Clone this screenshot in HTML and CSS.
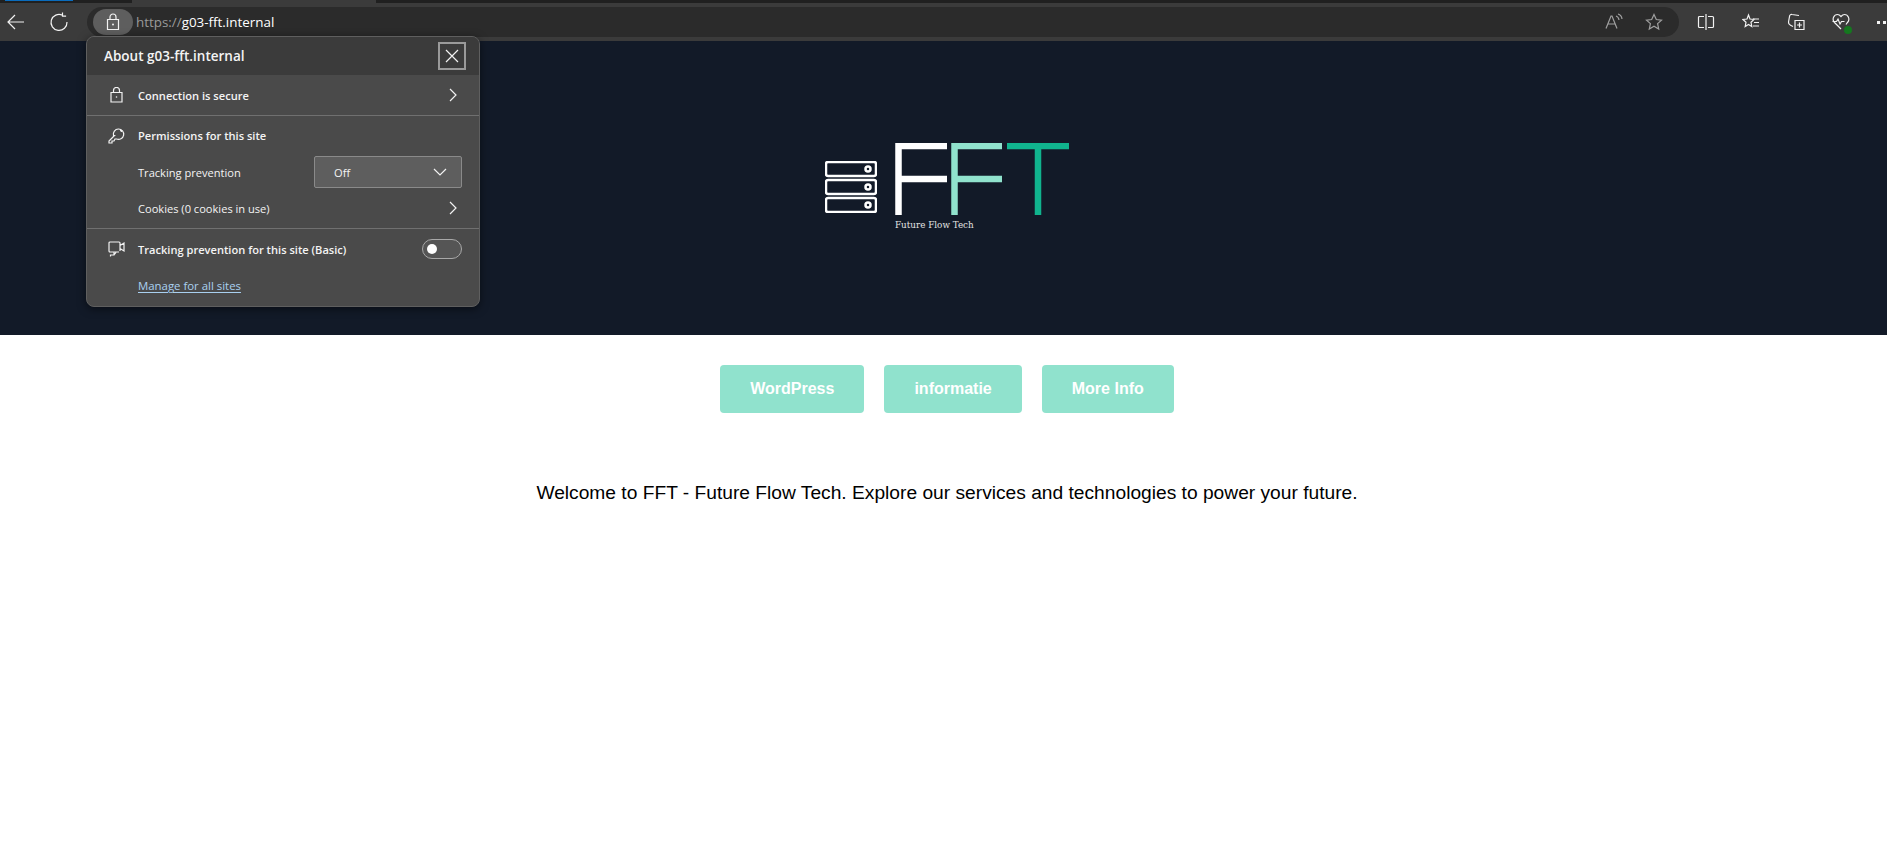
FILE: index.html
```html
<!DOCTYPE html>
<html>
<head>
    <title>FFT - Future Flow Tech</title>
    <link rel="stylesheet" href="styles.css">
</head>
<body>
    <div class="tabstrip">
        <div class="tab-accent"></div>
        <div class="tab-active"></div>
    </div>

    <div class="toolbar">
        <svg class="tool-icon" width="20" height="20" viewBox="0 0 20 20"><path d="M18 10H2M9 3l-7 7 7 7"/></svg>
        <svg class="tool-icon reload" width="20" height="20" viewBox="0 0 20 20"><path d="M13.5 3.2A8 8 0 1 0 18 10M13.5 0.5v3.6h3.6"/></svg>
        <div class="address">
            <div class="lock-pill">
                <svg class="tool-icon" width="16" height="18" viewBox="0 0 16 18"><path d="M2.5 6.5h11v10h-11zM5 6.5V4a3 3 0 0 1 6 0v2.5"/><circle class="dot" cx="8" cy="11.5" r="1"/></svg>
            </div>
            <span class="url-scheme">https://</span><span class="url-host">g03-fft.internal</span>
            <div class="address-end">
                <svg class="tool-icon dim" width="18" height="18" viewBox="0 0 18 18"><path d="M1 15.5 6 3h1l5 12.5M3 11h7M11 3c2 .7 2.8 2 3 4M13 1c2.5.8 3.8 2.5 4 5"/></svg>
                <svg class="tool-icon dim" width="18" height="18" viewBox="0 0 18 18"><path d="m9 1.5 2.3 5 5.2.6-3.9 3.5 1.1 5.4L9 13.3 4.3 16l1.1-5.4L1.5 7.1l5.200-.6z"/></svg>
            </div>
        </div>
        <div class="toolbar-end">
            <svg class="tool-icon" width="18" height="18" viewBox="0 0 18 18"><path d="M7 3.5H2.5a1 1 0 0 0-1 1v9a1 1 0 0 0 1 1H7M11 3.5h4.5a1 1 0 0 1 1 1v9a1 1 0 0 1-1 1H11M9 1v16"/></svg>
            <svg class="tool-icon" width="18" height="18" viewBox="0 0 18 18"><path d="m6.5 2 1.5 4 4 .5-3 2.8.8 4.2-3.3-2-3.3 2 .8-4.2-3-2.8 4-.5zM11 6h6M12 9.5h5M11 13h6"/></svg>
            <svg class="tool-icon" width="18" height="18" viewBox="0 0 18 18"><path d="M12 2.5 5 1.5a2 2 0 0 0-2.500 2L1.500 9c-.2 1.500.5 2.500 2 3.200L6 13.500M8 7.500h9v9H8zM12.500 9.500v5M10 12h5"/></svg>
            <div class="health">
                <svg class="tool-icon" width="18" height="18" viewBox="0 0 18 18"><path d="M9 16 2.5 9.5C-.5 6 2 1.5 5.5 1.5 7 1.5 8 2.3 9 3.5c1-1.2 2-2 3.5-2 3.5 0 6 4.5 3 8L14 11.500M.5 8.500h4l1.500-2.500 2 5 1.500-2.500h3"/></svg>
                <span class="health-badge"></span>
            </div>
            <div class="more"><span></span><span></span><span></span></div>
        </div>
    </div>

    <div class="banner">
        <div class="logo">
            <svg class="logo-servers" width="52" height="52" viewBox="0 0 52 52">
                <rect x="1" y="1" width="50" height="14" rx="2"/>
                <rect x="1" y="19" width="50" height="14" rx="2"/>
                <rect x="1" y="37" width="50" height="14" rx="2"/>
                <circle cx="43" cy="8" r="2.5"/>
                <circle cx="43" cy="26" r="2.5"/>
                <circle cx="43" cy="44" r="2.5"/>
            </svg>
            <div class="logo-text">
                <svg class="logo-letters" width="175" height="72" viewBox="0 0 175 72">
                    <path class="l-white" d="M3.5 72V3H52M3.5 36H52"/>
                    <path class="l-mint" d="M59.5 72V3H107M59.5 36H107"/>
                    <path class="l-green" d="M112 3h62M143 3v69"/>
                </svg>
                <div class="logo-sub">Future Flow Tech</div>
            </div>
        </div>
    </div>

    <nav class="buttons">
        <a class="btn" href="#">WordPress</a>
        <a class="btn" href="#">informatie</a>
        <a class="btn" href="#">More Info</a>
    </nav>

    <p class="welcome">Welcome to FFT - Future Flow Tech. Explore our services and technologies to power your future.</p>

    <div class="popup">
        <div class="popup-head">
            <span>About g03-fft.internal</span>
            <button class="close">
                <svg class="tool-icon" width="14" height="14" viewBox="0 0 14 14"><path d="m1 1 12 12M13 1 1 13"/></svg>
            </button>
        </div>
        <div class="row section">
            <svg class="tool-icon row-icon" width="14" height="16" viewBox="0 0 14 16"><path d="M1.5 5.500h11v9.500h-11zM4 5.500V3.500a3 3 0 0 1 6 0v2"/><circle class="dot" cx="7" cy="10" r=".8"/></svg>
            <strong>Connection is secure</strong>
            <svg class="tool-icon chev" width="8" height="14" viewBox="0 0 8 14"><path d="m1 1 6 6-6 6"/></svg>
        </div>
        <div class="section perms">
            <div class="row">
                <svg class="tool-icon row-icon" width="17" height="17" viewBox="0 0 17 17"><path d="M6.5 8.500 1 14v2h3v-2h2l1-2h1.500a5.200 5.200 0 1 0-3-3.500zM12 3.500a1.500 1.500 0 0 1 1.500 1.500"/></svg>
                <strong>Permissions for this site</strong>
            </div>
            <div class="row plain">
                <span>Tracking prevention</span>
                <div class="select">
                    <span>Off</span>
                    <svg class="tool-icon" width="14" height="8" viewBox="0 0 14 8"><path d="m1 1 6 6 6-6"/></svg>
                </div>
            </div>
            <div class="row plain">
                <span>Cookies (0 cookies in use)</span>
                <svg class="tool-icon chev" width="8" height="14" viewBox="0 0 8 14"><path d="m1 1 6 6-6 6"/></svg>
            </div>
        </div>
        <div class="row toggle-row">
            <svg class="tool-icon row-icon" width="17" height="17" viewBox="0 0 17 17"><path d="M11 11H2a1 1 0 0 1-1-1V2a1 1 0 0 1 1-1h9a1 1 0 0 1 1 1v8M12 4.500 16 2v8l-4-2.500M6 11v3H2.500v1.500M8 11.500 6 14"/></svg>
            <strong>Tracking prevention for this site (Basic)</strong>
            <span class="toggle"><span class="knob"></span></span>
        </div>
        <a class="manage" href="#">Manage for all sites</a>
    </div>
</body>
</html>
```

FILE: styles.css
```css
html, body { margin: 0; padding: 0; }
body { height: 862px; overflow: hidden; background: white; font-family: "Liberation Sans", Arial, sans-serif; position: relative; }

.tabstrip { height: 3px; background: #202020; display: flex; }
.tab-accent { width: 68px; margin-left: 5px; height: 1px; background: #0a6cbd; }
.tab-active { width: 244px; margin-left: 59px; background: #3b3b3b; }

.toolbar { height: 38px; background: #3b3b3b; display: flex; align-items: center; box-sizing: border-box; padding-left: 6px; font-family: "Open Sans", sans-serif; }
.tool-icon { fill: none; stroke: #f2f2f2; stroke-width: 1.2; flex: none; }
.tool-icon .dot { fill: #f2f2f2; stroke: none; }
.tool-icon.dim { stroke: #a0a0a0; }
.reload { margin-left: 23px; }

.address { margin-left: 18px; width: 1592px; height: 30px; background: #2b2b2b; border-radius: 15px; display: flex; align-items: center; font-size: 13.4px; flex: none; }
.lock-pill { width: 40px; height: 26px; margin-left: 6px; margin-right: 3px; background: #5e5e5e; border-radius: 13px; display: flex; align-items: center; justify-content: center; }
.url-scheme { color: #9a9a9a; }
.url-host { color: white; }
.address-end { margin-left: auto; margin-right: 16px; display: flex; gap: 22px; }

.toolbar-end { display: flex; align-items: center; gap: 27px; margin-left: 18px; flex: none; }
.health { position: relative; height: 18px; }
.health-badge { position: absolute; right: -2px; bottom: -3px; width: 8px; height: 8px; background: #15781f; border-radius: 50%; }
.more { display: flex; gap: 3px; }
.more span { width: 3px; height: 3px; background: #f2f2f2; }

.banner { height: 294px; background: #121a28; display: flex; justify-content: center; }
.logo { display: flex; align-items: flex-start; margin-top: 102px; margin-left: 8px; }
.logo-servers { margin-top: 18px; margin-right: 18px; fill: none; stroke: white; stroke-width: 2.5; }
.logo-servers circle { fill: #121a28; stroke-width: 2.5; }
.logo-letters { display: block; fill: none; stroke-width: 6.5; }
.l-white { stroke: white; }
.l-mint { stroke: #90e2cd; }
.l-green { stroke: #10b48e; }
.logo-sub { font-family: "DejaVu Serif", serif; font-size: 8.8px; line-height: 12px; color: #e4e4e4; margin-top: 4px; }

.buttons { display: flex; justify-content: center; gap: 20px; margin-top: 30px; padding-left: 7px; }
.btn { display: block; padding: 15px 30px; border-radius: 4px; background: #90e2cd; color: white; font-size: 16px; line-height: 18px; font-weight: bold; text-decoration: none; }

.welcome { margin: 67px 0 0; padding-left: 7px; text-align: center; font-size: 19.2px; line-height: 26px; color: black; }

.popup { position: absolute; left: 86px; top: 36px; width: 394px; height: 271px; box-sizing: border-box; background: #4a4a4a; border: 1px solid #5f5f5f; border-radius: 8px; box-shadow: 0 2px 8px rgba(0,0,0,0.5); color: #f4f4f4; font-family: "Open Sans", sans-serif; font-size: 11.1px; overflow: hidden; }
.popup-head { height: 38px; background: #3b3b3b; display: flex; align-items: center; justify-content: space-between; padding: 0 13px 0 17px; font-size: 13.5px; font-weight: 600; }
.close { width: 28px; height: 28px; padding: 0; background: none; border: 2px solid #9a9a9a; display: flex; align-items: center; justify-content: center; }
.row { display: flex; align-items: center; padding: 0 17px 0 20px; }
.row strong { font-weight: 600; }
.row-icon { margin-right: 12px; width: 19px; }
.chev { margin-left: auto; margin-right: 5px; }
.section { border-bottom: 1px solid #707070; }
.row.section { height: 40px; }
.perms { height: 112px; }
.perms .row:first-child { height: 38px; }
.row.plain { padding-left: 51px; height: 36px; }
.select { margin-left: auto; width: 148px; height: 32px; box-sizing: border-box; padding: 0 14px 0 19px; background: #5e5e5e; border: 1px solid #8a8a8a; border-radius: 2px; display: flex; align-items: center; justify-content: space-between; }
.toggle-row { height: 40px; }
.toggle { margin-left: auto; width: 40px; height: 20px; box-sizing: border-box; border: 1px solid #a8a8a8; border-radius: 10px; background: #555; display: flex; align-items: center; padding-left: 4px; }
.knob { width: 10px; height: 10px; border-radius: 50%; background: white; }
.manage { display: inline-block; margin: 9px 0 0 51px; font-size: 11.4px; color: #a9d0f0; text-decoration: underline; text-underline-offset: 2px; }
```
